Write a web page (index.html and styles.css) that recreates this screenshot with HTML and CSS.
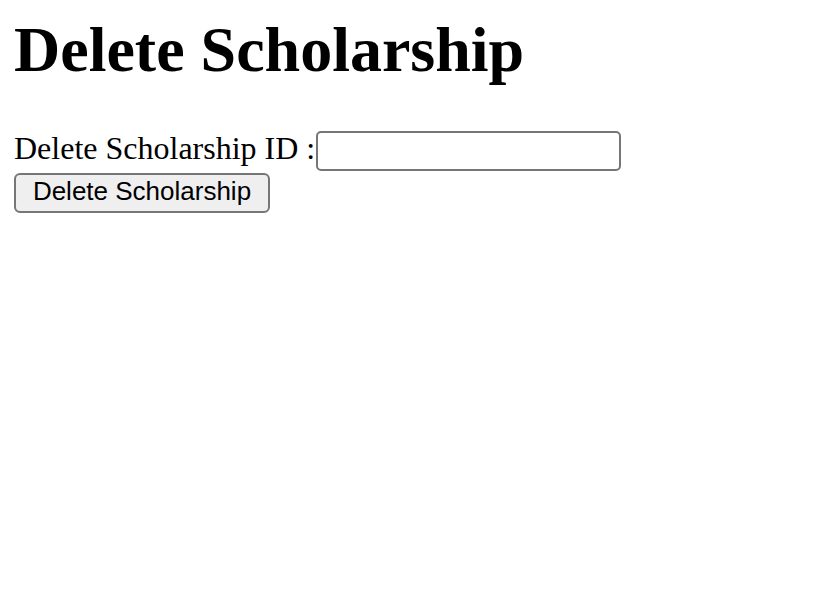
FILE: index.html
```html
<!DOCTYPE html>
<html>
<head>
<meta charset="utf-8">
<title>Delete Scholarship</title>
<link rel="stylesheet" href="styles.css">
</head>
<body>
<h1 class="title">Delete Scholarship</h1>
<form class="form">
  <div class="row">
    <label class="label" for="sid">Delete Scholarship ID :</label>
    <input class="field" id="sid" type="text">
  </div>
  <button class="btn" type="button">Delete Scholarship</button>
</form>
</body>
</html>
```

FILE: styles.css
```css
html, body {
  background: #ffffff;
}
body {
  margin: 14px;
  font-family: "Liberation Serif", "Times New Roman", serif;
  color: #000000;
}
.title {
  margin: 0 0 45px 0;
  font-size: 64px;
  line-height: 71px;
  font-weight: bold;
}
.form {
  margin: 0;
}
.row {
  display: flex;
  align-items: flex-start;
}
.label {
  font-size: 32px;
  line-height: 36px;
  padding-right: 1px;
}
.field {
  box-sizing: border-box;
  width: 305px;
  height: 40px;
  margin: 1px 0 0 0;
  border: 2px solid #767676;
  border-radius: 5px;
  background: #ffffff;
  font-family: "Liberation Sans", Arial, sans-serif;
  font-size: 26px;
  padding: 2px 4px;
}
.btn {
  display: block;
  box-sizing: border-box;
  width: 256px;
  height: 40px;
  margin: 2px 0 0 0;
  padding: 0 0 3px 0;
  border: 2px solid #767676;
  border-radius: 6px;
  background: #efefef;
  color: #000000;
  font-family: "Liberation Sans", Arial, sans-serif;
  font-size: 26px;
  text-align: center;
}
```
